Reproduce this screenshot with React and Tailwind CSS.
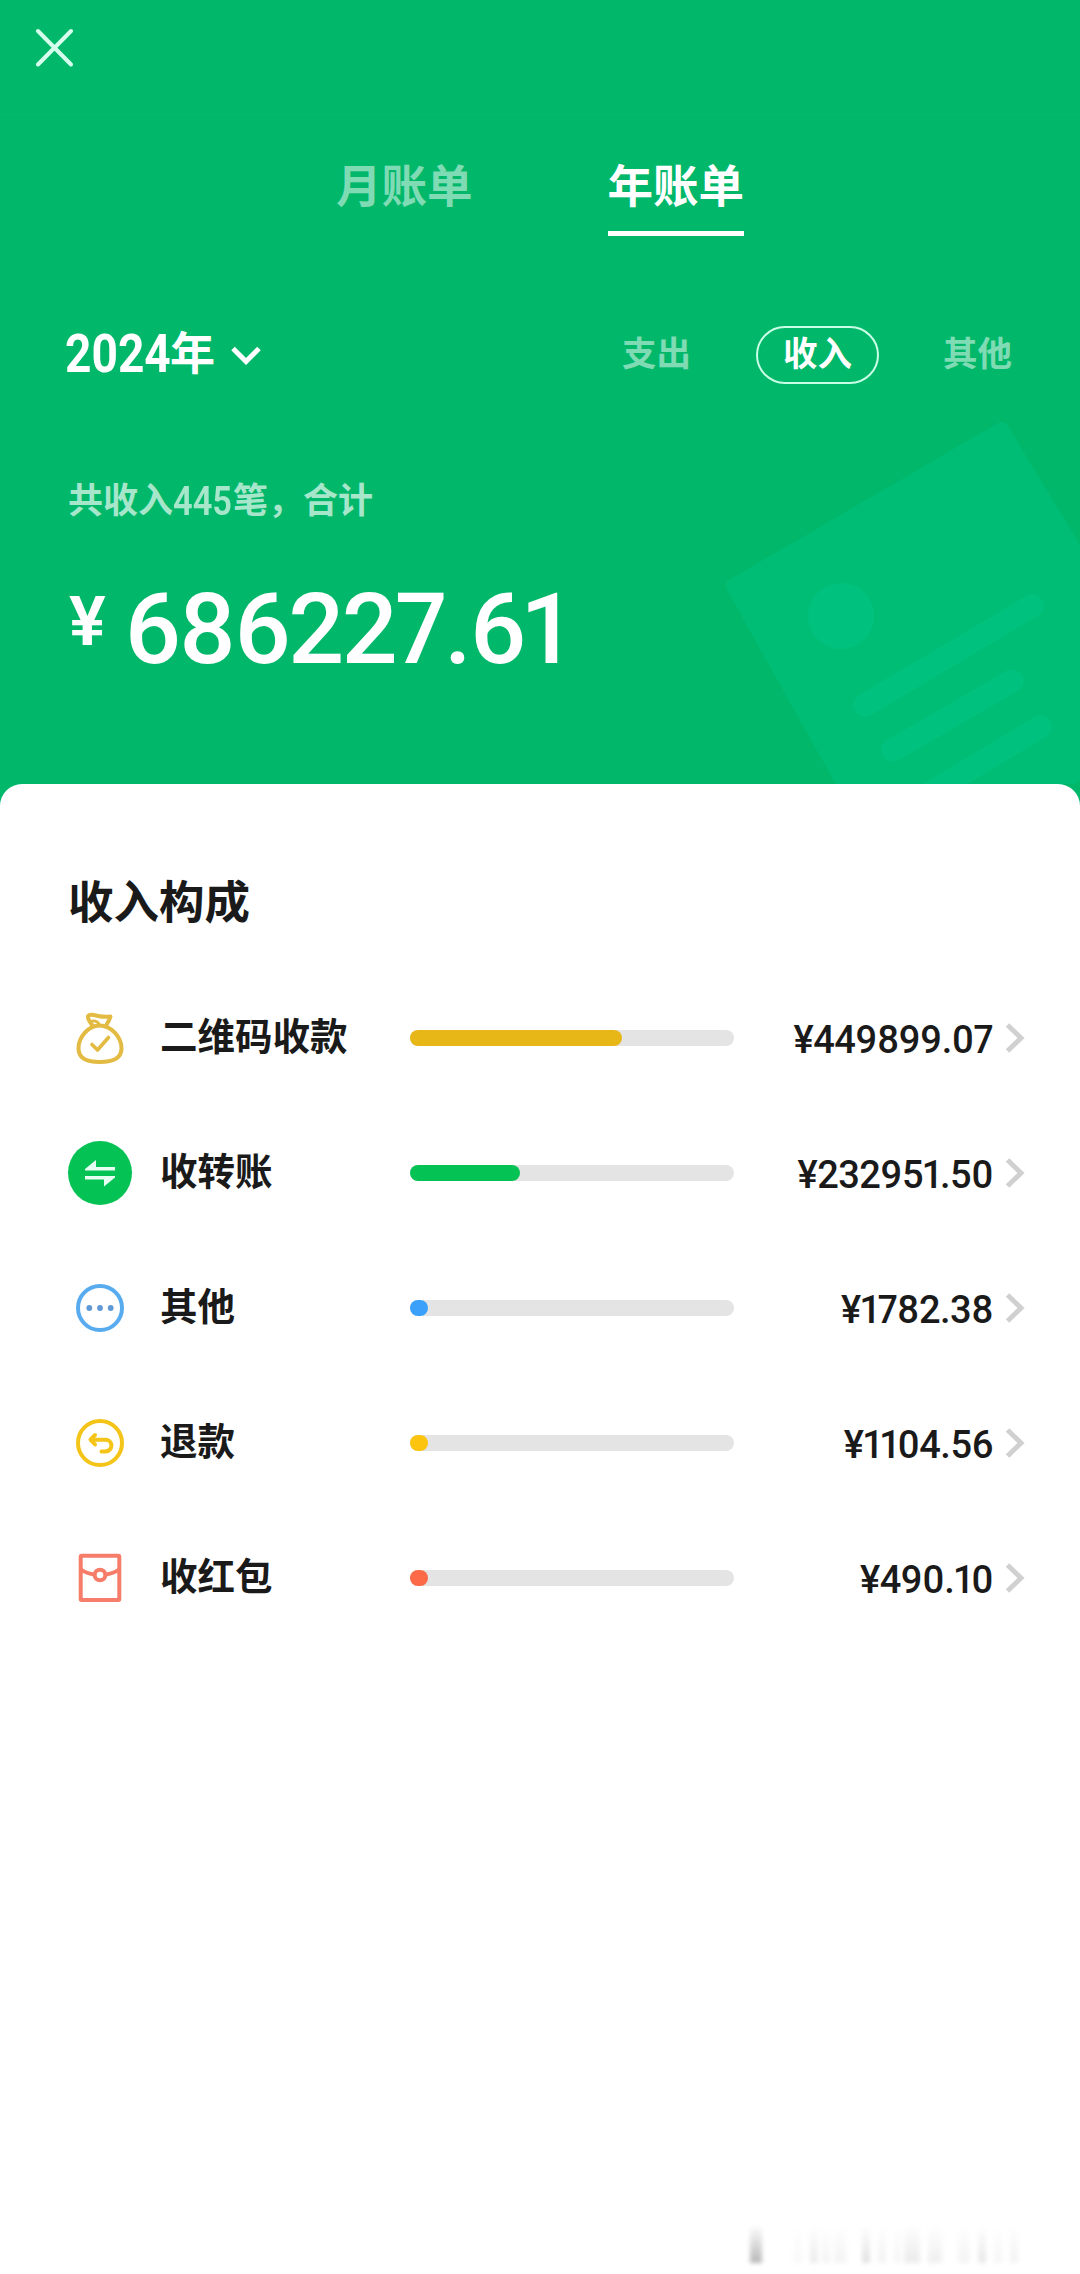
import { useState } from 'react'

const MoneyBagIcon = () => (
  <svg className="w-16 h-16" viewBox="0 0 64 64" fill="none" stroke="#e3ba42" strokeWidth="4" strokeLinecap="round" strokeLinejoin="round">
    <path d="M24.500 19.500 C22 16 19.500 13 20 10.500 C21 7.500 26 9 30.500 10 C35 11.200 39 11 42.500 10.500 C41.500 14 40 16.500 38 19.500" />
    <path d="M24 15 C27 14.500 29.500 15.500 31.500 18.500" strokeWidth="2.6" />
    <path d="M31.500 19.500 C20.500 19.500 10.500 31 10.500 42.500 C10.500 53 19.500 56 31.500 56 C44 56 53.500 53 53.500 42.500 C53.500 31 43 19.500 31.500 19.500 Z" />
    <path d="M24 38.500 L29.500 44 L40.500 31.500" strokeWidth="3.6" />
  </svg>
)

const TransferIcon = () => (
  <svg className="w-16 h-16" viewBox="0 0 64 64">
    <circle cx="32" cy="32" r="32" fill="#05c255" />
    <path d="M17 29.500 V28 L28 19 V26 H47 V29.500 Z" fill="#e6fff2" />
    <path d="M47 35 V36.500 L36 45.500 V38.500 H17 V35 Z" fill="#e6fff2" />
  </svg>
)

const OtherIcon = () => (
  <svg className="w-16 h-16" viewBox="0 0 64 64">
    <circle cx="32" cy="32" r="22" fill="none" stroke="#57abee" strokeWidth="4" />
    <circle cx="21.3" cy="32" r="2.9" fill="#6099d3" />
    <circle cx="32" cy="32" r="2.9" fill="#6099d3" />
    <circle cx="42.7" cy="32" r="2.9" fill="#6099d3" />
  </svg>
)

const RefundIcon = () => (
  <svg className="w-16 h-16" viewBox="0 0 64 64" fill="none" stroke="#f4c418" strokeWidth="4" strokeLinecap="round" strokeLinejoin="round">
    <circle cx="32" cy="32" r="22" />
    <path d="M27 24 L22.500 28.700 L27 33.500" />
    <path d="M23 28.700 H37.500 A5.900 5.900 0 0 1 37.500 40.500 H33.500" />
  </svg>
)

const RedPacketIcon = () => (
  <svg className="w-16 h-16" viewBox="0 0 64 64" fill="none" stroke="#f67d69" strokeWidth="4">
    <rect x="12.700" y="9.700" width="38.600" height="44.300" rx="1" />
    <circle cx="32" cy="29" r="5.300" />
    <path d="M13 23.500 C17 26.500 22 28 27 28.700" />
    <path d="M51 23.500 C47 26.500 42 28 37 28.700" />
  </svg>
)

// 右上角的账单底纹
const BillPattern = () => (
  <svg className="absolute right-0 bottom-0 w-[360px] h-[370px]" viewBox="0 0 360 370" fill="none">
    <path d="M9 166 L278 9 Q284 6 288 12 L460 296 L183 490 L7 176 Q3 169 9 166 Z" fill="#00bd76" />
    <circle cx="121" cy="202" r="33" fill="#00c27e" />
    <g stroke="#00c27e" strokeWidth="23" strokeLinecap="round">
      <path d="M145 291 L312 192" />
      <path d="M173 336 L292 267" />
      <path d="M200 385 L320 313" />
    </g>
  </svg>
)

const filters = ['支出', '收入', '其他']

const total = 686227.61

const items = [
  { id: 1, name: '二维码收款', amount: 449899.07, bar: 'bg-[#e6b716]', icon: MoneyBagIcon },
  { id: 2, name: '收转账', amount: 232951.5, bar: 'bg-[#05c255]', icon: TransferIcon },
  { id: 3, name: '其他', amount: 1782.38, bar: 'bg-[#3aa0fa]', icon: OtherIcon },
  { id: 4, name: '退款', amount: 1104.56, bar: 'bg-[#fcc40f]', icon: RefundIcon },
  { id: 5, name: '收红包', amount: 490.1, bar: 'bg-[#fc6a48]', icon: RedPacketIcon }
]

// 底部残影：间距、宽度、颜色
const streaks = [
  'w-3 ml-0 to-[#b8b8b8]',
  'w-2 ml-8 to-[#f8f8f8]',
  'w-2 ml-2 to-[#ebebeb]',
  'w-2 ml-1 to-[#f4f4f4]',
  'w-3 ml-1 to-[#f3f3f3]',
  'w-2 ml-4 to-[#e2e2e2]',
  'w-2 ml-2 to-[#f2f2f2]',
  'w-1.5 ml-2 to-[#f4f4f4]',
  'w-4 ml-1 to-[#ebebeb]',
  'w-3.5 ml-2 to-[#efefef]',
  'w-3 ml-4 to-[#f4f4f4]',
  'w-2 ml-2 to-[#e8e8e8]',
  'w-2 ml-2 to-[#f5f5f5]',
  'w-2 ml-2 to-[#f2f2f2]'
]

const App = () => {
  const [tab, setTab] = useState('年账单')
  const [filter, setFilter] = useState('收入')

  return (
    <div className="w-[1080px] h-[2274px] flex flex-col overflow-hidden bg-[#00b76a] font-['Roboto','Noto_Sans_CJK_SC',sans-serif]">
      <header className="relative h-[784px] shrink-0 text-white">
        <BillPattern />
        <div className="relative">
          <div className="h-[114px] pt-7 pl-[35px]">
            <svg className="w-[38px] h-[39px]" viewBox="0 0 38 39" stroke="#d5ffec" strokeWidth="4" strokeLinecap="round">
              <path d="M3 3 L36 36.500 M36 3 L3 36.500" />
            </svg>
          </div>

          <div className="flex justify-center gap-[135px] border-t border-[#06b96e] pt-12">
            {['月账单', '年账单'].map((name) => (
              <button
                key={name}
                onClick={() => setTab(name)}
                className={`h-[73px] text-[45.500px] leading-[50px] font-bold flex items-start border-b-[5px] ${tab === name ? 'border-white' : 'border-transparent text-white/50'}`}
              >
                {name}
              </button>
            ))}
          </div>

          <div className="mt-[90px] pl-[65px] pr-[68px] h-[58px] flex items-center justify-between">
            <button className="flex items-center text-[45px] leading-[58px] font-bold">
              <span className="w-[105px]">
                <span className="inline-block origin-left scale-x-[0.87] text-[53px] font-bold">2024</span>
              </span>
              年
              <svg className="ml-4 mt-0.5 w-[30px] h-5" viewBox="0 0 30 20" fill="none" stroke="#fff" strokeWidth="5">
                <path d="M2 2.500 L15 15.500 L28 2.500" />
              </svg>
            </button>
            <div className="flex items-center text-[34.500px] font-bold">
              {filters.map((name) => (
                <button
                  key={name}
                  onClick={() => setFilter(name)}
                  className={`leading-[48px] ${filter === name ? 'ml-[65px] mr-16 h-[58px] px-[25px] pb-0.5 border-[2.500px] border-[#c9ffe7] rounded-full' : 'pb-0.5 text-white/50'}`}
                >
                  {name}
                </button>
              ))}
            </div>
          </div>

          <div className="mt-[93px] pl-[68px] flex h-[50px] text-[35px] leading-[50px] font-bold text-white/65">
            共收入
            <span className="w-[60px]">
              <span className="inline-block origin-left scale-x-[0.86] text-[40px] font-semibold">445</span>
            </span>
            笔，合计
          </div>

          <div className="mt-[53px] pl-[69px] flex items-baseline font-medium">
            <span className="w-[55px] text-[69px] leading-[80px] relative -top-[18px] font-semibold">¥</span>
            <span className="text-[98.500px] leading-[100px] tracking-[-2.500px] proportional-nums">{total.toFixed(2)}</span>
          </div>
        </div>
      </header>

      <main className="flex-1 flex flex-col bg-white rounded-t-[22px] text-[#1a1a1a]">
        <h2 className="mt-[95px] pl-[68px] text-[45.500px] leading-[50px] font-bold">收入构成</h2>

        <div className="mt-[41px]">
          {items.map((item) => (
            <div key={item.id} className="h-[135px] pl-[68px] pr-[55px] flex items-center">
              <item.icon />
              <span className="ml-7 w-[250px] -mt-0.5 text-[37.500px] leading-[50px] font-bold">{item.name}</span>
              <div className="w-[324px] h-4 rounded-full bg-[#e4e4e4]">
                <div
                  className={`h-full min-w-[18px] rounded-full ${item.bar}`}
                  style={{ width: `${(item.amount / total) * 100}%` }}
                ></div>
              </div>
              <span className="ml-auto mt-1 text-[38px] leading-[50px] tracking-[-0.5px] font-medium proportional-nums">
                ¥{item.amount.toFixed(2)}
              </span>
              <svg className="ml-3 w-5 h-[30px]" viewBox="0 0 20 30" fill="none" stroke="#d0d0d0" strokeWidth="5">
                <path d="M2.500 2 L16 15 L2.500 28" />
              </svg>
            </div>
          ))}
        </div>

        <div className="mt-auto mb-[11px] pl-[750px] h-[38px] flex">
          {streaks.map((cls, i) => (
            <div key={i} className={`h-full bg-linear-to-b from-white blur-[2px] ${cls}`}></div>
          ))}
        </div>
      </main>
    </div>
  )
}

export default App
